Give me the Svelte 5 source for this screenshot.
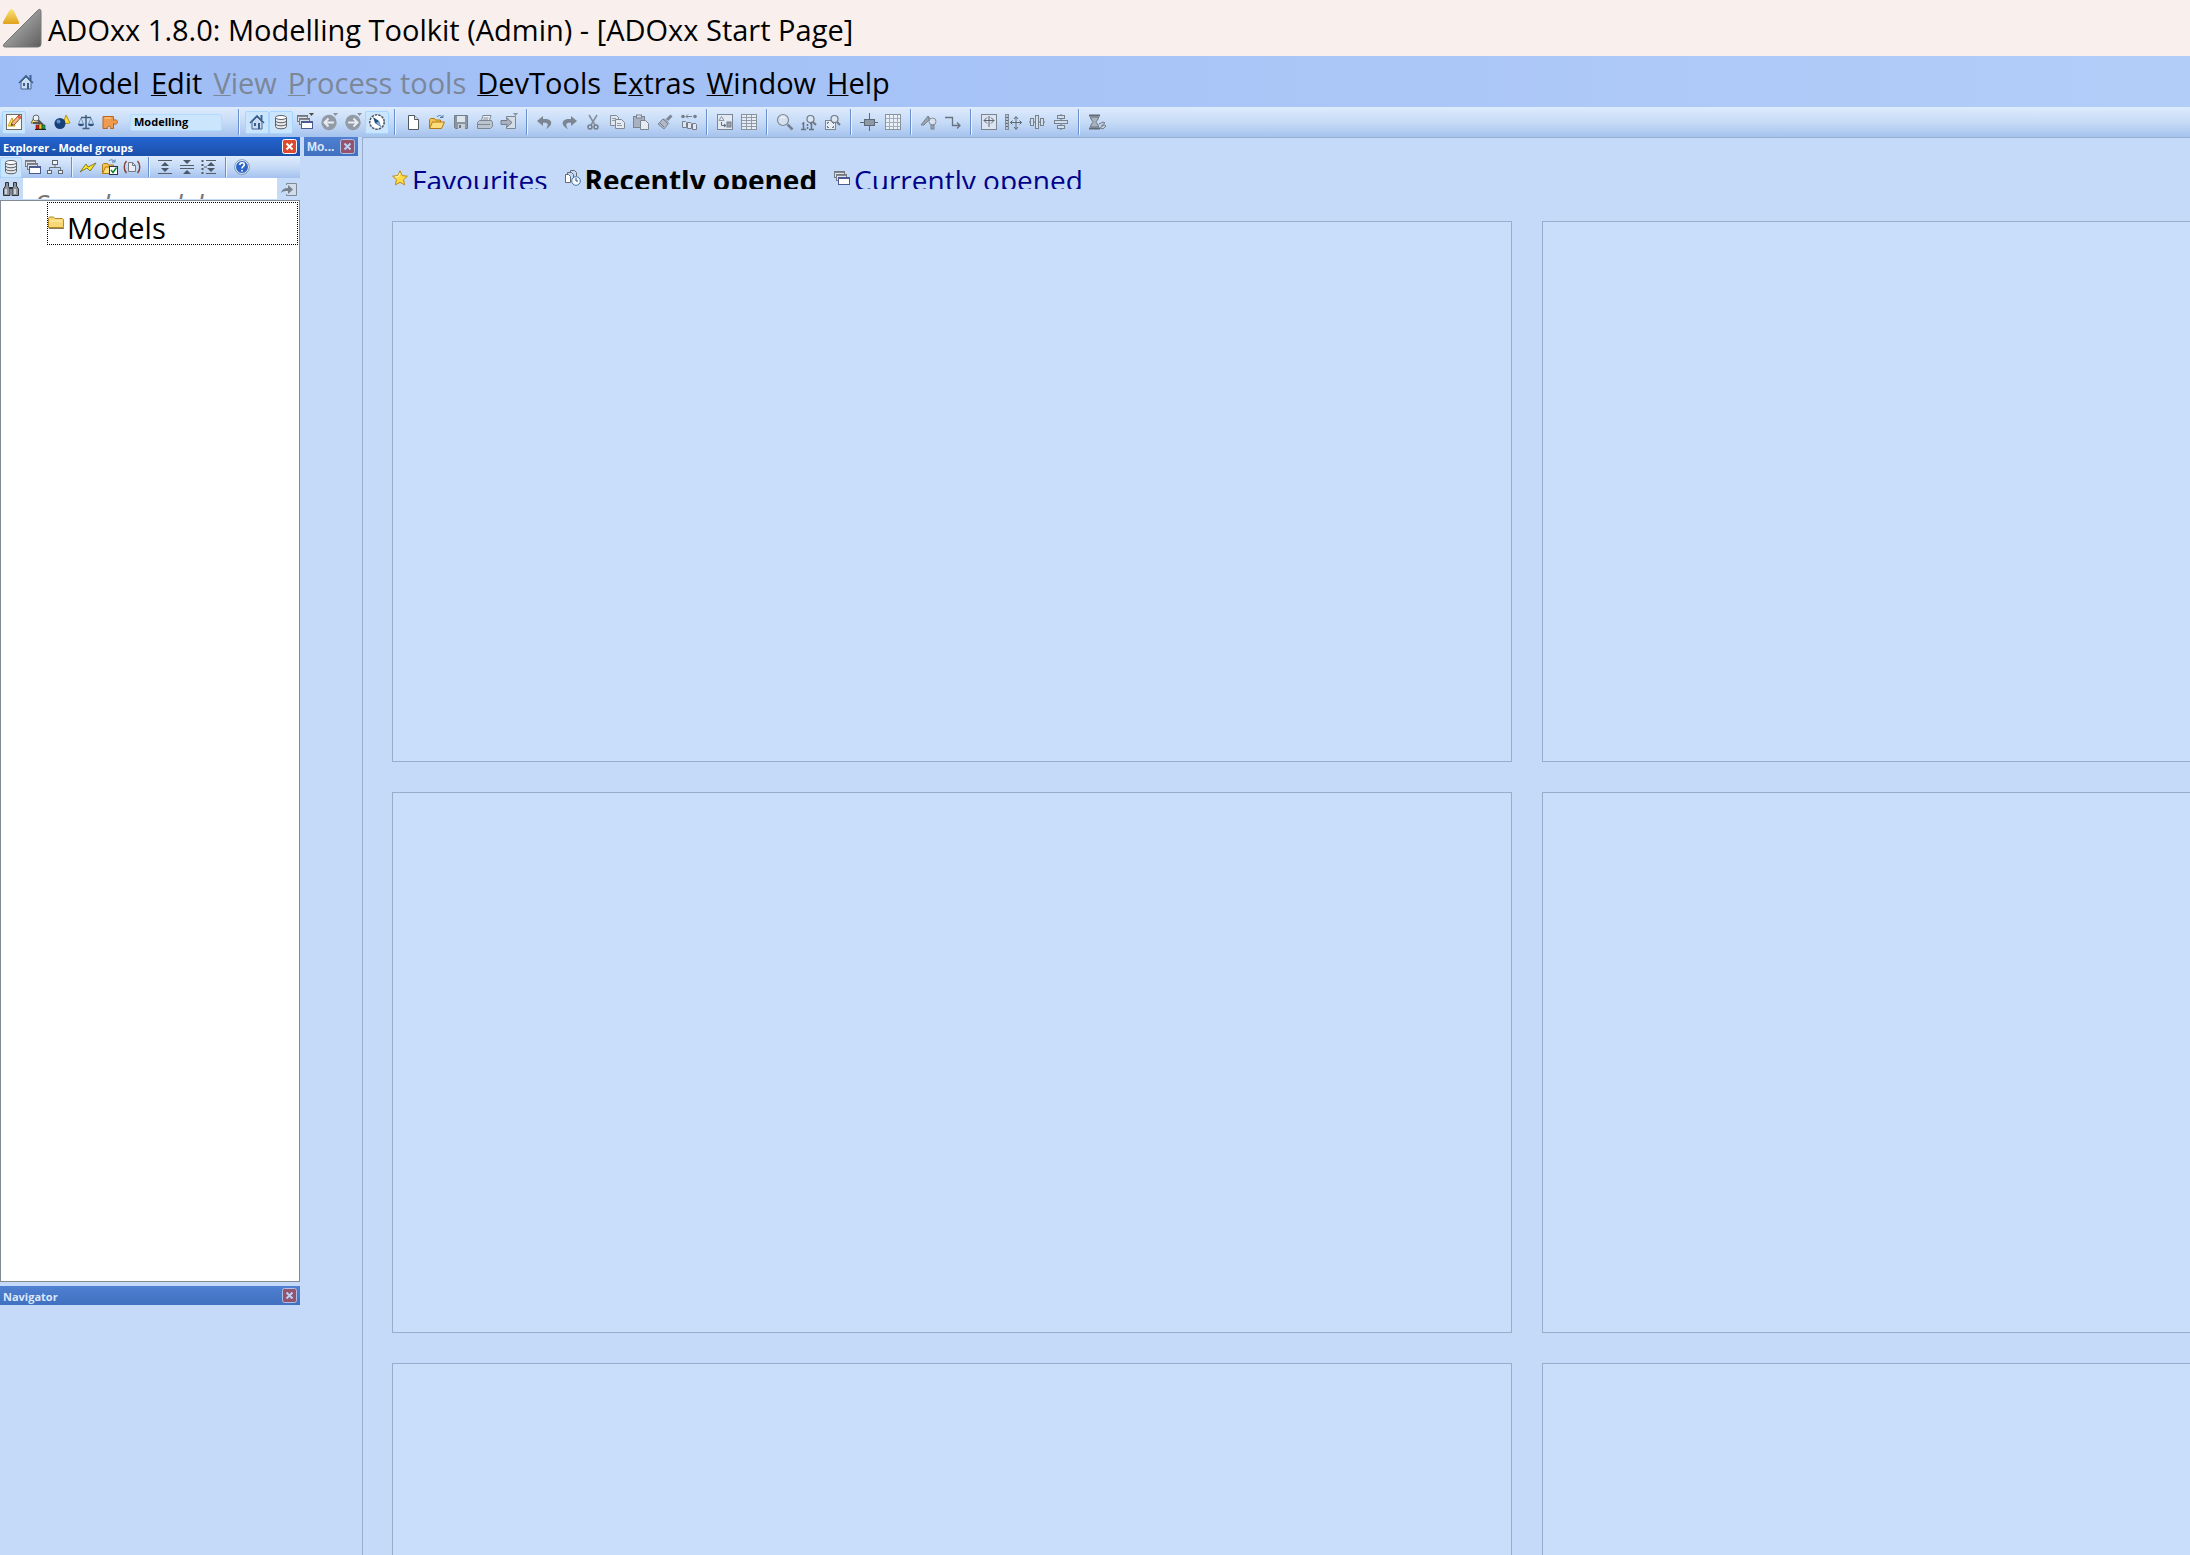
<script>
  // Menu bar entries, split around the underlined access key
  const menus = [
    { before: "", key: "M", after: "odel" },
    { before: "", key: "E", after: "dit" },
    { before: "", key: "V", after: "iew", disabled: true },
    { before: "", key: "P", after: "rocess tools", disabled: true },
    { before: "", key: "D", after: "evTools" },
    { before: "E", key: "x", after: "tras" },
    { before: "", key: "W", after: "indow" },
    { before: "", key: "H", after: "elp" },
  ];

  const componentTools = [
    { icon: "pencil", label: "Modelling" },
    { icon: "analysis", label: "Analysis" },
    { icon: "simulation", label: "Simulation" },
    { icon: "scales", label: "Evaluation" },
    { icon: "puzzle", label: "Import/Export" },
  ];

  const toolGroups = [
    [
      { icon: "home", label: "Start page", active: true },
      { icon: "database", label: "Explorer", active: true },
      { icon: "windows", label: "Windows" },
      { icon: "back", label: "Back", disabled: true },
      { icon: "forward", label: "Forward", disabled: true },
      { icon: "compass", label: "Navigator", active: true },
    ],
    [
      { icon: "file", label: "New" },
      { icon: "open", label: "Open" },
      { icon: "save", label: "Save", disabled: true },
      { icon: "print", label: "Print", disabled: true },
      { icon: "exit", label: "Close", disabled: true },
    ],
    [
      { icon: "undo", label: "Undo", disabled: true },
      { icon: "redo", label: "Redo", disabled: true },
      { icon: "cut", label: "Cut", disabled: true },
      { icon: "copy", label: "Copy", disabled: true },
      { icon: "paste", label: "Paste", disabled: true },
      { icon: "brush", label: "Format", disabled: true },
      { icon: "convert", label: "Convert", disabled: true },
    ],
    [
      { icon: "graphic", label: "Graphic view", disabled: true },
      { icon: "table", label: "Table view", disabled: true },
    ],
    [
      { icon: "zoom", label: "Zoom", disabled: true },
      { icon: "zoomOne", label: "Zoom 1:1", disabled: true },
      { icon: "zoomFit", label: "Zoom to fit", disabled: true },
    ],
    [
      { icon: "snap", label: "Snap", disabled: true },
      { icon: "grid", label: "Grid", disabled: true },
    ],
    [
      { icon: "shapes", label: "Representation", disabled: true },
      { icon: "connector", label: "Connector", disabled: true },
    ],
    [
      { icon: "resize", label: "Resize", disabled: true },
      { icon: "move", label: "Move", disabled: true },
      { icon: "alignH", label: "Align horizontally", disabled: true },
      { icon: "alignV", label: "Align vertically", disabled: true },
    ],
    [{ icon: "hourglass", label: "History", disabled: true }],
  ];

  const explorerGroups = [
    [
      { icon: "database", label: "Database", active: true },
      { icon: "windows2", label: "Opened models" },
      { icon: "tree", label: "Hierarchy" },
    ],
    [
      { icon: "flash", label: "Refresh" },
      { icon: "openCheck", label: "Open selected" },
      { icon: "brackets", label: "References" },
    ],
    [
      { icon: "expand", label: "Expand" },
      { icon: "collapse", label: "Collapse" },
      { icon: "expandAll", label: "Expand all" },
    ],
    [{ icon: "help", label: "Help" }],
  ];

  const tabs = [
    { icon: "star", label: "Favourites" },
    { icon: "recent", label: "Recently opened" },
    { icon: "windows2", label: "Currently opened" },
  ];

  const cards = [1, 2, 3, 4, 5, 6];

  let activeTab = "Recently opened";
  let component = "Modelling";
  let searchText = "";

  const lens = `<circle cx="9.5" cy="5" r="3.5" fill="#dce6f2" stroke="#6f7986" stroke-width="1.2"/><path d="M12 8l3 3" stroke="#6f7986" stroke-width="2"/>`;
  const stack = `<rect x=".5" y="1.5" width="10" height="6" fill="#dce3ee" stroke="#75777e"/><path d="M.5 2.5h10" stroke="#85878e"/><rect x="2.5" y="4.5" width="10" height="6" fill="#dce3ee" stroke="#75777e"/><path d="M2.5 5.5h10" stroke="#85878e"/><rect x="4.5" y="7.5" width="11" height="7" fill="#fff" stroke="#4c5a90"/><path d="M4.5 8.5h11" stroke="#4c5a90"/>`;
  const folder = `<path d="M.5 14.500v-9l1-1h4l1 1.500h5v3" fill="#f4c453" stroke="#b27a16"/><path d="M.5 14.500l3-6.500h12l-3 6.500z" fill="#fddc7c" stroke="#b27a16"/>`;

  // 16 x 16 toolbar glyphs
  const icons = {
    pencil: `<rect x=".5" y=".5" width="15" height="15" fill="#fdfdf4" stroke="#6c6c6c"/><path d="M2 12l4-8 3 8z" fill="#ffe65b" stroke="#c9a41c"/><path d="M5 11.500l1-3L13 1l2.500 2L8 11z" fill="#f4b77e" stroke="#9f5836"/><path d="M12 2.500l2.500 2" stroke="#e7503f" stroke-width="2"/><path d="M5 11.500l.7-2 1.300 1z" fill="#333"/>`,
    analysis: `<path d="M1 9l4-7 4 7z" fill="#ffe783" stroke="#7a6a32"/><circle cx="6" cy="4" r="3" fill="#e7eff9" stroke="#666"/><path d="M8 6l5 5M3 9h7" stroke="#555" stroke-width="2"/><path d="M5 15.500h11" stroke="#222"/><rect x="6" y="11" width="3" height="4" fill="#d22" stroke="#500" stroke-width=".5"/><rect x="9" y="10" width="3" height="5" fill="#f3c52a" stroke="#530" stroke-width=".5"/><rect x="12" y="11" width="3" height="4" fill="#289447" stroke="#032" stroke-width=".5"/>`,
    simulation: `<path d="M9 10l3-9 4 8z" fill="#ffdf3e" stroke="#b8901c"/><circle cx="6" cy="9.500" r="5.500" fill="#173f7a"/><circle cx="4.500" cy="7.500" r="2" fill="#5f90cf"/>`,
    scales: `<path d="M3 3.500h10M8 1v13M4.500 14.500h7" stroke="#42607f" stroke-width="1.500" fill="none"/><path d="M3 4l-2.500 6h5zM13 4l-2.500 6h5z" fill="none" stroke="#59779b" stroke-width=".7"/><path d="M0 10h6c0 3-6 3-6 0zM10 10h6c0 3-6 3-6 0z" fill="#2f557f"/>`,
    puzzle: `<path d="M1 2.500h10.500v4c1.500-1.500 4-.5 4 1.500s-2.500 3-4 1.500v5H8.500c1-3-4-3-3 0H1z" fill="#ef9a4c" stroke="#bb6420"/><path d="M2.500 4H9" stroke="#ffd09c"/>`,
    home: `<path d="M3 8v7h10V8L8 3z" fill="#cbdcf0" stroke="#47678e"/><path d="M1 9l7-7 7 7" fill="none" stroke="#3d6291" stroke-width="1.600"/><path d="M12.500 1v5" stroke="#3d6291" stroke-width="2"/><rect x="5" y="9" width="2" height="3" fill="#365f94"/><rect x="9" y="9" width="2" height="6" fill="#365f94"/>`,
    database: `<path d="M2.500 3.500v9c0 3 11 3 11 0v-9" fill="#e8eaed" stroke="#5d6269"/><ellipse cx="8" cy="3.500" rx="5.500" ry="2" fill="#fff" stroke="#5d6269"/><path d="M2.500 6.500c0 3 11 3 11 0M2.500 9.500c0 3 11 3 11 0" fill="none" stroke="#5d6269"/>`,
    windows: `${stack}<path d="M12 -1h5l-2.500 3z" fill="#4a4b37"/>`,
    windows2: stack,
    back: `<circle cx="8" cy="8.500" r="7.700" fill="#929aa5"/><path d="M7.500 4.500l-4 4 4 4M4 8.500h9" fill="none" stroke="#e8edf4" stroke-width="2"/><path d="M12 -1h5l-2.500 3z" fill="#89919b"/>`,
    forward: `<circle cx="8" cy="8.500" r="7.700" fill="#929aa5"/><path d="M8.500 4.500l4 4-4 4M12 8.500H3" fill="none" stroke="#e8edf4" stroke-width="2"/><path d="M12 -1h5l-2.500 3z" fill="#89919b"/>`,
    compass: `<circle cx="8" cy="8" r="7.200" fill="#fff" stroke="#4c5460" stroke-width="1.500" stroke-dasharray="2.500 1"/><path d="M4 3l6 4 2 6-6-4z" fill="#1d4e83"/><path d="M7 9l3-2 2 6z" fill="#7da9d3"/>`,
    file: `<path d="M3.500 1.500h6l4 4v10h-10z" fill="#fff" stroke="#525960"/><path d="M9.500 1.500v4h4" fill="#dce4ef" stroke="#525960"/>`,
    open: `${folder}<path d="M8 3c1-2 4-2 5 0M11 3.500h3V1" fill="none" stroke="#4977a8"/>`,
    save: `<path d="M1.500 1.500h13v13h-12l-1-1z" fill="#8c96a3" stroke="#737d8a"/><rect x="4" y="2" width="8" height="6" fill="#dce4ee"/><rect x="5" y="10" width="7" height="5" fill="#c6ced9"/><rect x="6" y="11" width="2" height="3" fill="#6c7684"/>`,
    print: `<path d="M4 8l2-6.500h8L12 8" fill="#eef2f8" stroke="#7d8794"/><path d="M.5 8.500l2-2h12l1 2v4l-2 2h-13z" fill="#bcc4cf" stroke="#7d8794"/><path d="M1 10.500h12M6.500 4h5M6 6h5" stroke="#808994"/>`,
    exit: `<path d="M5.500 5V2.500h9v12h-9V12" fill="#d5dde8" stroke="#7d8794"/><path d="M0 6.500h6V4l5 4.500L6 13v-2.500H0z" fill="#a9b2be" stroke="#737d8a"/><path d="M12 -1h5l-2.500 3z" fill="#89919b"/>`,
    undo: `<path d="M6 2L0 7l6 5V9c5-1 6 2 3 6 7-3 8-11-3-10z" fill="#7c8693"/>`,
    redo: `<path d="M10 2l6 5-6 5V9c-5-1-6 2-3 6-7-3-8-11 3-10z" fill="#7c8693"/>`,
    cut: `<path d="M4 1l6 10M12 1L6 11" stroke="#858e9a" stroke-width="1.500"/><circle cx="5" cy="13" r="2" fill="none" stroke="#747e8a" stroke-width="1.500"/><circle cx="11" cy="13" r="2" fill="none" stroke="#747e8a" stroke-width="1.500"/>`,
    copy: `<path d="M1.500 1.500h6l2 2v8h-8z" fill="#dfe6ef" stroke="#808a96"/><path d="M6.500 5.500h6l3 3v6h-9z" fill="#e6ebf3" stroke="#808a96"/><path d="M3 4.500h4M3 6.500h3M8 9.500h4M8 11.500h5" stroke="#929ba7"/>`,
    paste: `<rect x=".5" y="2.500" width="11" height="11" fill="#a8b1bd" stroke="#7b8592"/><rect x="3.500" y="1" width="5" height="3" fill="#d6dde7" stroke="#7b8592"/><path d="M7.500 6.500h5l3 3v6h-8z" fill="#e6ebf3" stroke="#7b8592"/>`,
    brush: `<path d="M14.500 1.500L10 6" stroke="#7c8693" stroke-width="3"/><path d="M6 5l5 5-4 5-6-5z" fill="#b1bac6" stroke="#7b8592"/><path d="M7 4.500l5 5M3 9l4 4" stroke="#6f7986"/>`,
    convert: `<circle cx="2" cy="2.500" r="1.800" fill="#747e8a"/><circle cx="14" cy="2.500" r="1.800" fill="#747e8a"/><path d="M5 2.500h6M7 .5l-2 2 2 2" fill="none" stroke="#747e8a"/><path d="M1.500 7.500h3l1 1v5h-4zM6.500 8.500h3l1 1v5h-4zM11.500 9.500h3l1 1v5h-4z" fill="#e1e7f0" stroke="#747e8a"/>`,
    graphic: `<rect x=".5" y=".5" width="15" height="15" fill="#e2e9f3" stroke="#7c8693"/><path d="M2 6.500l2.500-4 2.500 4z" fill="none" stroke="#8d96a2"/><path d="M4.500 8v3.500h4M7 10l2 1.500L7 13" fill="none" stroke="#606a77"/><rect x="10" y="8" width="4" height="5" fill="#97a0ad" stroke="#747e8a"/>`,
    table: `<rect x=".5" y=".5" width="15" height="15" fill="#e6ecf4" stroke="#8993a0"/><path d="M1 3.500h14M1 6.500h14M1 9.500h14M1 12.500h14M5.500 1v14M10.500 1v14" stroke="#929ca9"/>`,
    zoom: `<circle cx="6" cy="6" r="5.500" fill="#d6e1ee" stroke="#7f8995" stroke-width="1.200"/><path d="M3.500 4.500c1-1.500 3-1.500 4.500-.5" stroke="#fff" fill="none"/><path d="M10.500 10.500l5 5" stroke="#77818d" stroke-width="2.500"/>`,
    zoomOne: `${lens}<path d="M1 10l1.500-1v6M0 15.500h5M9 10l1.500-1v6M8 15.500h5" stroke="#68727e" stroke-width="1.500" fill="none"/><path d="M6.500 10v2M6.500 13v2" stroke="#68727e" stroke-width="1.500"/>`,
    zoomFit: `<rect x=".5" y="6.500" width="10" height="9" fill="#e6edf6" stroke="#7b8592"/><path d="M2.500 10V8.500H4M7 8.500h1.500V10M8.500 12v1.500H7M4 13.500H2.500V12" fill="none" stroke="#68727e"/>${lens}`,
    snap: `<path d="M8.500 -1v18M-1 8.500h18" stroke="#5f6974"/><rect x="3.500" y="5.500" width="10" height="6" fill="#8d98a6" stroke="#606a76"/>`,
    grid: `<rect x=".5" y=".5" width="15" height="15" fill="#eaf0f8" stroke="#8993a0"/><path d="M1 4.500h14M1 8.500h14M1 12.500h14M4.500 1v14M8.500 1v14M12.500 1v14" stroke="#a2adba"/>`,
    shapes: `<path d="M0 11l7-9 2 3-6 6zM7 2l3 9" fill="#9aa4b0" stroke="#7b8592"/><circle cx="11.500" cy="7.500" r="3.500" fill="#d9e2ed" stroke="#858f9b"/><rect x="10" y="11" width="3" height="4" fill="#9aa3af" stroke="#7b8592"/>`,
    connector: `<path d="M0 3.500h7.500v8H15M12 8.500l3 3-3 3" fill="none" stroke="#69737f" stroke-width="1.300"/>`,
    resize: `<rect x=".5" y=".5" width="15" height="15" fill="#dbe4f0" stroke="#7b8592"/><path d="M8 2v11M3 6.500h10M6 3.500l-3 3 3 3M10 3.500l3 3-3 3" fill="none" stroke="#5c6672"/>`,
    move: `<rect x=".5" y=".5" width="3" height="15" fill="#b9c3d0" stroke="#828c99"/><path d="M1 3.500h2M1 6.500h2M1 9.500h2M1 12.500h2M11 3v12M5 8.500h12M9 5l2-2.500L13 5M9 13l2 2.500 2-2.500M7.500 6.500l-2 2 2 2M14.500 6.500l2 2-2 2" fill="none" stroke="#5f6976"/>`,
    alignH: `<path d="M0 8h16" stroke="#68727e"/><rect x="1.500" y="4.500" width="3" height="7" fill="#d5dfeb" stroke="#77818e"/><rect x="6.500" y="1.500" width="3" height="13" fill="#d5dfeb" stroke="#77818e"/><rect x="11.500" y="4.500" width="3" height="7" fill="#d5dfeb" stroke="#77818e"/>`,
    alignV: `<path d="M8 0v16" stroke="#68727e"/><rect x="4.500" y="1.500" width="7" height="3" fill="#d5dfeb" stroke="#77818e"/><rect x="1.500" y="6.500" width="13" height="3" fill="#d5dfeb" stroke="#77818e"/><rect x="4.500" y="11.500" width="7" height="3" fill="#d5dfeb" stroke="#77818e"/>`,
    hourglass: `<path d="M0 1.500h11M0 14.500h11" stroke="#606a76" stroke-width="2"/><path d="M1.500 3h8c0 3-2.500 4-2.500 5s2.500 2 2.500 5h-8c0-3 2.500-4 2.500-5S1.500 6 1.500 3z" fill="#a9b3bf" stroke="#68727e"/><path d="M10 10l4-2 2 1-4 3M11 14l4-3 2 1-3 3z" fill="#c9d2de" stroke="#737d8a"/>`,
    tree: `<path d="M8 5v4M2.500 11V8.500h11V11" fill="none" stroke="#6d737a"/><rect x="5.500" y="1.500" width="5" height="4" fill="#f0f3f7" stroke="#5f656c"/><rect x=".5" y="11.500" width="4" height="3" fill="#f0f3f7" stroke="#5f656c"/><rect x="11.500" y="11.500" width="4" height="3" fill="#f0f3f7" stroke="#5f656c"/>`,
    flash: `<path d="M0 13l6-8 2 3 8-4-6 8-3-3z" fill="#ffe528" stroke="#6b6512" stroke-width=".8"/>`,
    openCheck: `${folder}<path d="M7 2c1-2 4-1 5 0M10 3h3V.5" fill="none" stroke="#4977a8"/><rect x="7.500" y="7.500" width="8" height="8" fill="#fff" stroke="#2c3550"/><path d="M9 11l2 2.500L14.500 8.500" fill="none" stroke="#108028" stroke-width="1.500"/>`,
    brackets: `<path d="M2.500 2C-.5 5 -.5 11 2.500 14M13.500 2c3 3 3 9 0 12" fill="none" stroke="#874337" stroke-width="1.500"/><path d="M4.500 3.500h4l3 3v6h-7z" fill="#e9edf3" stroke="#747982"/><path d="M8.500 3.500v3h3" fill="none" stroke="#747982"/>`,
    expand: `<path d="M1 1.500h14M1 14.500h14" stroke="#555c66"/><path d="M8 3l4 4H4zM8 13l4-4H4z" fill="#4d5866"/>`,
    collapse: `<path d="M1 6.500h14M1 9.500h14" stroke="#555c66"/><path d="M8 5l4-4H4zM8 11l4 4H4z" fill="#4d5866"/>`,
    expandAll: `<path d="M1.500 1v14" stroke="#555c66" stroke-width="2" stroke-dasharray="2 2"/><path d="M5 1.500h10M5 14.500h10M3 8h3" stroke="#555c66"/><path d="M10 3l4 4H6zM10 13l4-4H6z" fill="#4d5866"/>`,
    help: `<circle cx="8" cy="8" r="6.500" fill="#2d65c8" stroke="#fff"/><circle cx="8" cy="8" r="7.300" fill="none" stroke="#62789c" stroke-width=".7"/><path d="M5.800 6c0-3 4.500-3 4.500-.3C10.300 7.500 8 7.500 8 9.500M8 11v1.500" fill="none" stroke="#fff" stroke-width="1.600"/>`,
    binoculars: `<path d="M2.500 1.500h3v4l1.500 2v7H.5V8l2-3zM13.500 1.500h-3v4L9 7.500v7h6.500V8l-2-3z" fill="#8f949b" stroke="#2f3339"/><path d="M6 7h4" stroke="#2f3339" stroke-width="2"/><path d="M3 8v5M12 8v5" stroke="#e6e9ed" stroke-width="1.500"/>`,
    goTo: `<path d="M5.500 4V2.500h10v12h-10V13" fill="#d0dcec" stroke="#818b98"/><path d="M0 12c1-4 4-5 7-5V4l5 4.500L7 13v-3c-3 0-5 0-7 2z" fill="#77818d"/>`,
    star: `<path d="M8 .8l2.200 4.800 5.200.6-3.900 3.500 1.100 5.200L8 12.300l-4.600 2.600 1.100-5.200L.6 6.200l5.200-.6z" fill="#ffdc45" stroke="#bf8a1a"/><path d="M8 3l-1.500 3.500L3 7" fill="none" stroke="#fff6c0"/>`,
    recent: `<path d="M.5 4.500h3l2 2v6h-5z" fill="#fff" stroke="#666b72"/><path d="M2.500 4V2.500h4l2 2v5M5.500 2V.5h4l2 2V6" fill="none" stroke="#666b72"/><circle cx="11" cy="11" r="4.300" fill="#f4f9ff" stroke="#4077a8"/><path d="M11 8v3h2" fill="none" stroke="#27527c"/>`,
    folder: `<path d="M.5 13.500V4.500l1-1.500h4l1.500 1.500h7.500l1 1v8z" fill="#f8d875" stroke="#b58a27"/><path d="M2 7h12" stroke="#fff1b7"/><path d="M1 14.500h15" stroke="#8b7b55"/>`,
    close: `<rect x=".5" y=".5" width="14" height="14" rx="2" fill="#dd4a2e" stroke="#fff"/><path d="M4.500 4.500l6 6M10.500 4.500l-6 6" stroke="#fff" stroke-width="2"/>`,
    closeOff: `<rect x=".5" y=".5" width="14" height="14" rx="2" fill="#93536f" stroke="#b0bfe2"/><path d="M4.500 4.500l6 6M10.500 4.500l-6 6" stroke="#bcd0f2" stroke-width="2"/>`,
  };
</script>

{#snippet icon(name)}
  <svg class="icon" width="16" height="16" viewBox="0 0 16 16" fill="none" aria-hidden="true">
    {@html icons[name]}
  </svg>
{/snippet}

{#snippet tool(item)}
  <button class="tool" class:active={item.active} disabled={item.disabled} title={item.label} aria-label={item.label}>
    {@render icon(item.icon)}
  </button>
{/snippet}

<div class="window">
  <header class="title-bar">
    <svg class="logo" width="42" height="42" viewBox="0 0 42 42" aria-hidden="true">
      <defs>
        <linearGradient id="steel" x1="0" y1="0" x2="1" y2="1">
          <stop offset="0.3" stop-color="#a8a8a8" />
          <stop offset="1" stop-color="#5e5e5e" />
        </linearGradient>
        <linearGradient id="gold" x1="0" y1="0" x2="0" y2="1">
          <stop offset="0" stop-color="#fbe27c" />
          <stop offset="1" stop-color="#e0a21c" />
        </linearGradient>
      </defs>
      <path d="M37 4q4-4 4 1v32q0 3-3 3H6q-5 0-1-4z" fill="url(#steel)" stroke="#777" />
      <path d="M9 4q2-4 5 0l5 11q1 2-2 2H5q-3 0-2-2z" fill="url(#gold)" />
    </svg>
    <h1>ADOxx 1.8.0: Modelling Toolkit (Admin) - [ADOxx Start Page]</h1>
  </header>

  <nav class="menu-bar">
    <span class="menu-home">{@render icon("home")}</span>
    {#each menus as menu}
      <button class="menu" disabled={menu.disabled}>{menu.before}<u>{menu.key}</u>{menu.after}</button>
    {/each}
  </nav>

  <div class="toolbar">
    {#each componentTools as item}
      {@render tool({ ...item, active: item.label === component })}
    {/each}
    <select class="component" aria-label="Component" bind:value={component}>
      {#each componentTools as item}
        <option>{item.label}</option>
      {/each}
    </select>
    {#each toolGroups as group}
      <span class="separator"></span>
      {#each group as item}
        {@render tool(item)}
      {/each}
    {/each}
  </div>

  <div class="workspace">
    <aside class="sidebar">
      <section class="explorer">
        <div class="panel-title">
          <h2>Explorer - Model groups</h2>
          <button class="close" aria-label="Close explorer">{@render icon("close")}</button>
        </div>
        <div class="toolbar small">
          {#each explorerGroups as group, i}
            {#if i > 0}<span class="separator"></span>{/if}
            {#each group as item}
              {@render tool(item)}
            {/each}
          {/each}
        </div>
        <div class="search">
          <button class="tool" aria-label="Search">{@render icon("binoculars")}</button>
          <input type="text" aria-label="Search models" placeholder="Search models" bind:value={searchText} />
          <button class="tool" aria-label="Go to result" disabled>{@render icon("goTo")}</button>
        </div>
        <div class="tree">
          <button class="tree-item">
            {@render icon("folder")}
            <span>Models</span>
          </button>
        </div>
      </section>
      <section class="navigator">
        <div class="panel-title inactive">
          <h2>Navigator</h2>
          <button class="close" aria-label="Close navigator">{@render icon("closeOff")}</button>
        </div>
      </section>
    </aside>

    <aside class="modelling">
      <div class="panel-title inactive">
        <h2 class="short">Mo...</h2>
        <button class="close" aria-label="Close modelling">{@render icon("closeOff")}</button>
      </div>
    </aside>

    <main>
      <div class="tabs">
        {#each tabs as tab}
          <button class="tab" class:selected={activeTab === tab.label} on:click={() => (activeTab = tab.label)}>
            {@render icon(tab.icon)}
            <span>{tab.label}</span>
          </button>
        {/each}
      </div>
      <div class="cards">
        {#each cards as card (card)}
          <div class="card"></div>
        {/each}
      </div>
    </main>
  </div>
</div>

<style>
  :global(body) {
    margin: 0;
    overflow: hidden;
  }

  .window {
    display: flex;
    flex-direction: column;
    height: 100vh;
    overflow: hidden;
    background: #c4daf8;
    color: #000;
    font-family: "Segoe UI", "Open Sans", sans-serif;
    font-size: 28px;
  }

  button {
    margin: 0;
    padding: 0;
    border: none;
    background: none;
    color: inherit;
    font: inherit;
  }

  h1,
  h2 {
    margin: 0;
    white-space: nowrap;
  }

  .icon {
    display: block;
    flex: none;
    overflow: visible;
  }

  .title-bar {
    display: flex;
    align-items: center;
    gap: 6px;
    flex: none;
    height: 56px;
    background: #f9f0ee;
  }

  .title-bar h1 {
    padding-top: 3px;
    font-size: 29px;
    font-weight: 400;
    line-height: 48px;
  }

  .logo {
    flex: none;
  }

  .menu-bar {
    display: flex;
    align-items: center;
    gap: 11px;
    flex: none;
    height: 51px;
    padding-left: 18px;
    background: linear-gradient(90deg, #9ebcf6, #b2cdf8);
  }

  .menu-home {
    margin-right: 10px;
  }

  .menu {
    padding-top: 3px;
    font-size: 29px;
    line-height: 48px;
    white-space: nowrap;
  }

  .menu u {
    text-decoration-thickness: 1px;
    text-underline-offset: 1px;
    text-decoration-skip-ink: none;
  }

  .menu:disabled {
    color: #7b8797;
  }

  .toolbar {
    display: flex;
    align-items: center;
    flex: none;
    height: 30px;
    padding-left: 2px;
    background: linear-gradient(#deebfd, #c6dbf7 50%, #a5c2ee);
  }

  .tool {
    display: flex;
    align-items: center;
    justify-content: center;
    flex: none;
    box-sizing: border-box;
    width: 24px;
    height: 23px;
    border: 1px solid transparent;
    border-radius: 2px;
  }

  .tool.active {
    border-color: #a4d6ff;
    background: #cbe5fd;
  }

  .separator {
    flex: none;
    box-sizing: border-box;
    width: 12px;
    height: 26px;
    border-left: 5px solid transparent;
    background: linear-gradient(90deg, #6a8fce 1px, #eaf2fd 1px, #eaf2fd 2px, transparent 2px) no-repeat padding-box;
  }

  .component {
    width: 92px;
    height: 17px;
    margin: 0 11px 0 8px;
    padding: 0 3px 1px;
    appearance: none;
    border: 1px solid #b2dcff;
    border-radius: 2px;
    background: #cbe5fd;
    color: #000;
    font-family: inherit;
    font-size: 11px;
    font-weight: 700;
    line-height: 14px;
  }

  .workspace {
    display: flex;
    flex: 1;
    min-height: 0;
  }

  .sidebar {
    display: flex;
    flex-direction: column;
    gap: 4px;
    flex: none;
    width: 300px;
  }

  .explorer {
    display: flex;
    flex: 1;
    flex-direction: column;
    min-height: 0;
  }

  .navigator {
    height: 269px;
  }

  .panel-title {
    display: flex;
    align-items: center;
    justify-content: space-between;
    flex: none;
    height: 19px;
    padding: 0 2px 0 3px;
    background: linear-gradient(#2265d2, #1b4fa9);
    color: #fff;
  }

  .panel-title.inactive {
    background: linear-gradient(#4f80d1, #4070c0);
    color: #dbe8fc;
  }

  .panel-title h2 {
    padding-top: 2px;
    font-size: 11px;
    line-height: 19px;
  }

  .panel-title .short {
    font-family: "Liberation Sans", Arial, sans-serif;
    font-size: 12px;
  }

  .toolbar.small {
    height: 22px;
    padding-left: 0;
  }

  .small .tool,
  .search .tool {
    width: 22px;
    height: 21px;
  }

  .small .separator {
    width: 11px;
    height: 20px;
  }

  .search {
    display: flex;
    flex: none;
    height: 21px;
    margin-bottom: 1px;
    overflow: hidden;
    background: #c6dbf7;
  }

  .search input {
    flex: 1;
    box-sizing: border-box;
    min-width: 0;
    height: 52px;
    margin: 0 1px;
    padding: 0 12px;
    border: none;
    background: #fff;
    font-family: inherit;
    font-size: 28px;
    font-style: italic;
  }

  .search input::placeholder {
    color: #767676;
  }

  .tree {
    flex: 1;
    min-height: 0;
    padding: 1px 1px 1px 46px;
    border: 1px solid #838a94;
    background: #fff;
  }

  .tree-item {
    display: flex;
    align-items: center;
    gap: 3px;
    box-sizing: border-box;
    width: 100%;
    height: 43px;
    padding-top: 8px;
    border: 1px dotted #000;
    font-size: 29px;
    line-height: 40px;
  }

  .tree-item .icon,
  .tab .icon {
    align-self: flex-start;
  }

  .tree-item .icon {
    margin-top: 3px;
  }

  .modelling {
    flex: none;
    width: 54px;
    margin: 0 4px;
  }

  main {
    flex: 1;
    min-width: 0;
    padding: 32px 0 0 29px;
    overflow: hidden;
    border-top: 1px solid #98adcb;
    border-left: 1px solid #98adcb;
  }

  .tabs {
    display: flex;
    gap: 17px;
    height: 19px;
    overflow: hidden;
    color: #00008b;
  }

  .tab {
    display: flex;
    gap: 4px;
    height: 36px;
    line-height: 20px;
    white-space: nowrap;
  }

  .tab.selected {
    color: #000;
    font-weight: 700;
  }

  .cards {
    display: grid;
    grid-template-columns: repeat(2, 1120px);
    grid-auto-rows: 541px;
    gap: 30px;
    margin-top: 32px;
  }

  .card {
    box-sizing: border-box;
    border: 1px solid #98adcb;
    background: #c9defb;
  }
</style>
